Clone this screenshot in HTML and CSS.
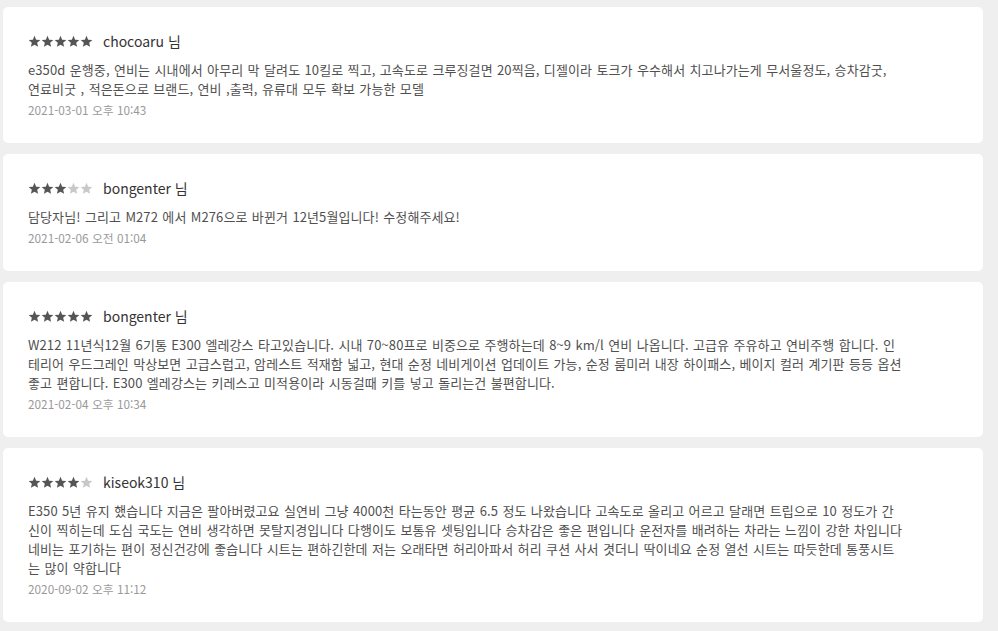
FILE: index.html
```html
<!DOCTYPE html>
<html lang="ko">
<head>
<meta charset="utf-8">
<title>리뷰</title>
<link rel="stylesheet" href="styles.css">
</head>
<body>
<svg width="0" height="0" class="defs" aria-hidden="true">
  <defs>
    <path id="star" d="M12 1.6l3.05 7.1 7.7.62-5.85 5.05 1.78 7.53L12 17.9l-6.68 4l1.78-7.53L1.25 9.32l7.7-.62z"/>
  </defs>
</svg>
<main class="list">
  <article class="review">
    <header class="head">
      <span class="stars"><svg class="star on" viewBox="0 0 24 24"><use href="#star"/></svg><svg class="star on" viewBox="0 0 24 24"><use href="#star"/></svg><svg class="star on" viewBox="0 0 24 24"><use href="#star"/></svg><svg class="star on" viewBox="0 0 24 24"><use href="#star"/></svg><svg class="star on" viewBox="0 0 24 24"><use href="#star"/></svg></span>
      <span class="name">chocoaru 님</span>
    </header>
    <p class="body">e350d 운행중, 연비는 시내에서 아무리 막 달려도 10킬로 찍고, 고속도로 크루징걸면 20찍음, 디젤이라 토크가 우수해서 치고나가는게 무서울정도, 승차감굿, 연료비굿 , 적은돈으로 브랜드, 연비 ,출력, 유류대 모두 확보 가능한 모델</p>
    <p class="date">2021-03-01 오후 10:43</p>
  </article>
  <article class="review">
    <header class="head">
      <span class="stars"><svg class="star on" viewBox="0 0 24 24"><use href="#star"/></svg><svg class="star on" viewBox="0 0 24 24"><use href="#star"/></svg><svg class="star on" viewBox="0 0 24 24"><use href="#star"/></svg><svg class="star off" viewBox="0 0 24 24"><use href="#star"/></svg><svg class="star off" viewBox="0 0 24 24"><use href="#star"/></svg></span>
      <span class="name">bongenter 님</span>
    </header>
    <p class="body">담당자님! 그리고 M272 에서 M276으로 바뀐거 12년5월입니다! 수정해주세요!</p>
    <p class="date">2021-02-06 오전 01:04</p>
  </article>
  <article class="review">
    <header class="head">
      <span class="stars"><svg class="star on" viewBox="0 0 24 24"><use href="#star"/></svg><svg class="star on" viewBox="0 0 24 24"><use href="#star"/></svg><svg class="star on" viewBox="0 0 24 24"><use href="#star"/></svg><svg class="star on" viewBox="0 0 24 24"><use href="#star"/></svg><svg class="star on" viewBox="0 0 24 24"><use href="#star"/></svg></span>
      <span class="name">bongenter 님</span>
    </header>
    <p class="body">W212 11년식12월 6기통 E300 엘레강스 타고있습니다. 시내 70~80프로 비중으로 주행하는데 8~9 km/l 연비 나옵니다. 고급유 주유하고 연비주행 합니다. 인테리어 우드그레인 막상보면 고급스럽고, 암레스트 적재함 넓고, 현대 순정 네비게이션 업데이트 가능, 순정 룸미러 내장 하이패스, 베이지 컬러 계기판 등등 옵션 좋고 편합니다. E300 엘레강스는 키레스고 미적용이라 시동걸때 키를 넣고 돌리는건 불편합니다.</p>
    <p class="date">2021-02-04 오후 10:34</p>
  </article>
  <article class="review">
    <header class="head">
      <span class="stars"><svg class="star on" viewBox="0 0 24 24"><use href="#star"/></svg><svg class="star on" viewBox="0 0 24 24"><use href="#star"/></svg><svg class="star on" viewBox="0 0 24 24"><use href="#star"/></svg><svg class="star on" viewBox="0 0 24 24"><use href="#star"/></svg><svg class="star off" viewBox="0 0 24 24"><use href="#star"/></svg></span>
      <span class="name">kiseok310 님</span>
    </header>
    <p class="body">E350 5년 유지 했습니다 지금은 팔아버렸고요 실연비 그냥 4000천 타는동안 평균 6.5 정도 나왔습니다 고속도로 올리고 어르고 달래면 트립으로 10 정도가 간신이 찍히는데 도심 국도는 연비 생각하면 못탈지경입니다 다행이도 보통유 셋팅입니다 승차감은 좋은 편입니다 운전자를 배려하는 차라는 느낌이 강한 차입니다 네비는 포기하는 편이 정신건강에 좋습니다 시트는 편하긴한데 저는 오래타면 허리아파서 허리 쿠션 사서 겻더니 딱이네요 순정 열선 시트는 따듯한데 통풍시트는 많이 약합니다</p>
    <p class="date">2020-09-02 오후 11:12</p>
  </article>
</main>
</body>
</html>
```

FILE: styles.css
```css
html, body {
  margin: 0;
  padding: 0;
  background: #efefef;
}
body {
  font-family: "Noto Sans CJK KR", "Noto Sans", sans-serif;
  color: #555;
}
.defs {
  position: absolute;
  width: 0;
  height: 0;
  overflow: hidden;
}
.list {
  display: flex;
  flex-direction: column;
  gap: 11px;
  padding: 7px 15px 6px 3px;
}
.review {
  background: #fff;
  border-radius: 5px;
  padding: 24px 25px 24px 25px;
}
.head {
  display: flex;
  align-items: center;
  height: 20px;
}
.stars {
  display: flex;
  align-items: center;
  margin-right: 10px;
}
.star {
  width: 13px;
  height: 13px;
  display: block;
}
.star.on { fill: #555; }
.star.off { fill: #c8c8c8; }
.name {
  font-size: 14px;
  line-height: 20px;
  color: #333;
}
.body {
  margin: 9px 0 0;
  max-width: 874.5px;
  font-size: 13px;
  line-height: 19px;
  letter-spacing: 0.1px;
  word-spacing: 0.6px;
  color: #505050;
}
.date {
  margin: 2px 0 0;
  font-size: 11.8px;
  line-height: 19px;
  color: #999;
}
```
